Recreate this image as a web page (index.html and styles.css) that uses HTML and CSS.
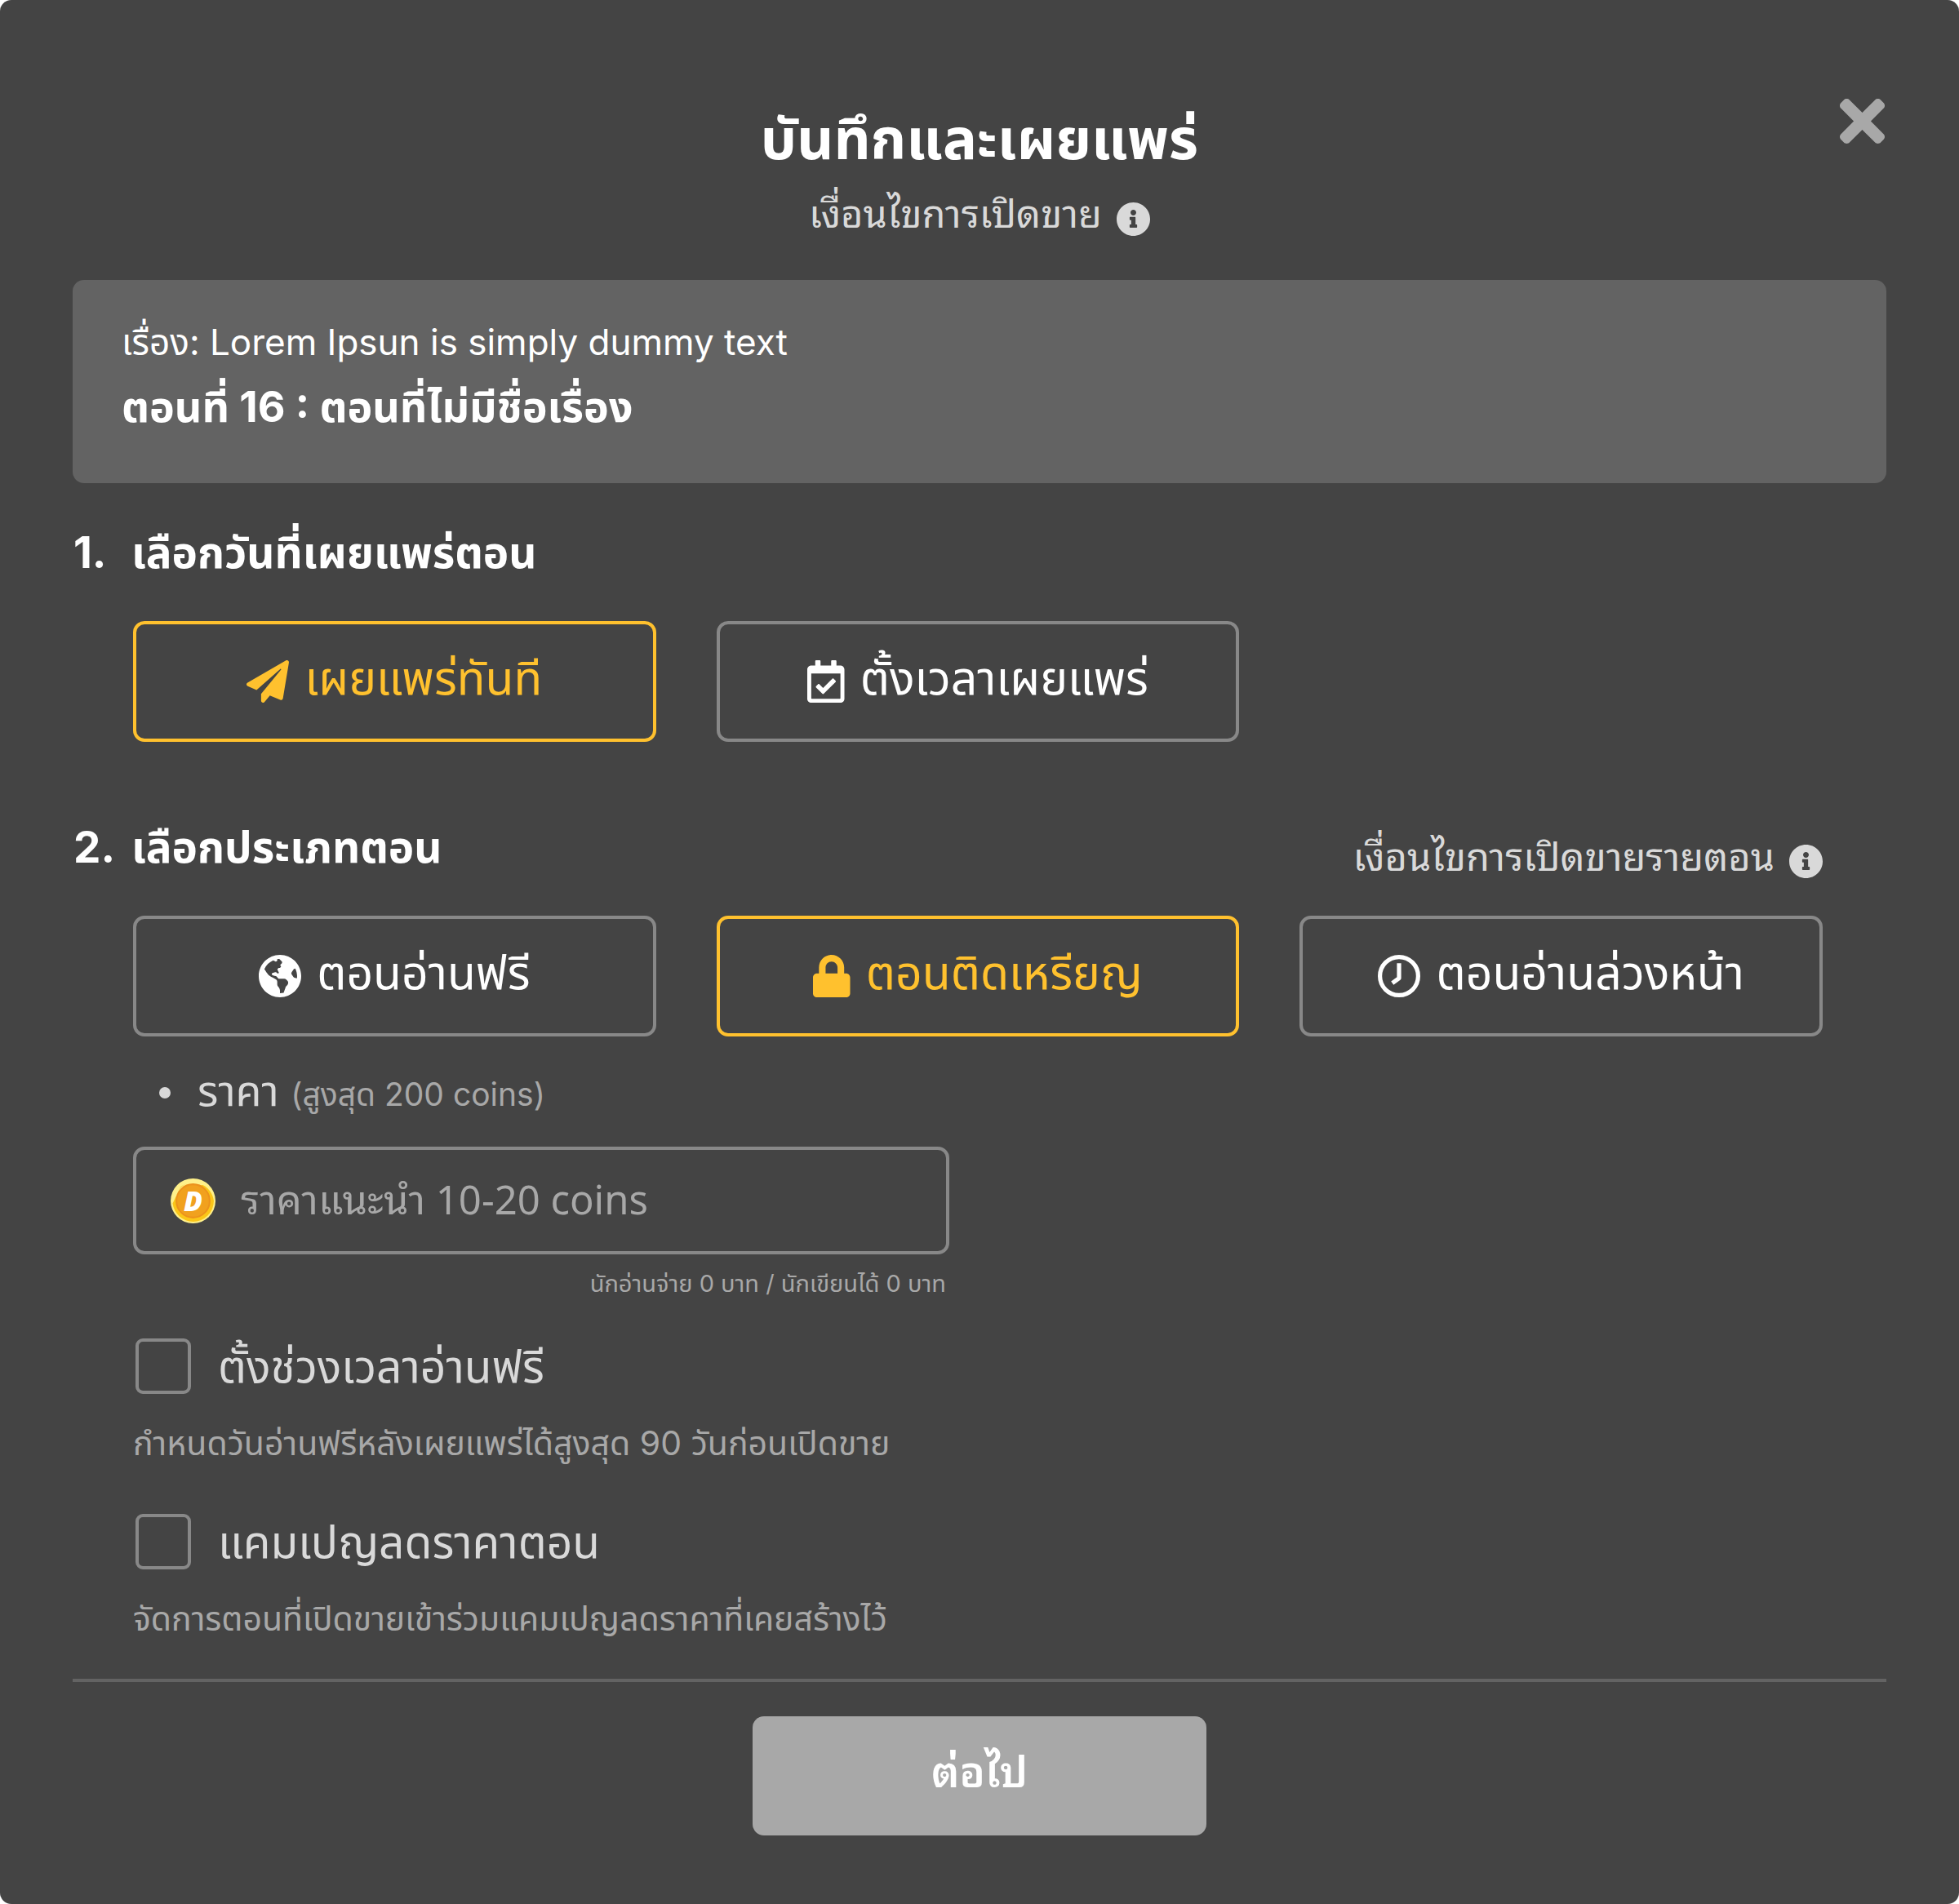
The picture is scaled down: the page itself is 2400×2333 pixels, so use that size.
FILE: index.html
```html
<!DOCTYPE html>
<html lang="th">
<head>
    <meta charset="UTF-8">
    <meta name="viewport" content="width=device-width, initial-scale=1.0">
    <title>บันทึกและเผยแพร่</title>
    <link rel="stylesheet" href="styles.css">
</head>
<body>
    <!-- Shared icon shapes -->
    <svg class="sprite" aria-hidden="true">
        <symbol id="icon-info" viewBox="8 8 496 496">
            <path d="M256 8C119.043 8 8 119.083 8 256c0 136.997 111.043 248 248 248s248-111.003 248-248C504 119.083 392.957 8 256 8zm0 110c23.196 0 42 18.804 42 42s-18.804 42-42 42-42-18.804-42-42 18.804-42 42-42zm56 254c0 6.627-5.373 12-12 12h-88c-6.627 0-12-5.373-12-12v-24c0-6.627 5.373-12 12-12h12v-64h-12c-6.627 0-12-5.373-12-12v-24c0-6.627 5.373-12 12-12h64c6.627 0 12 5.373 12 12v100h12c6.627 0 12 5.373 12 12v24z"/>
        </symbol>
    </svg>

    <main class="modal">
        <header class="modal-header">
            <h1>บันทึกและเผยแพร่</h1>
            <a class="terms" href="#terms">เงื่อนไขการเปิดขาย
                <svg class="info-icon" aria-hidden="true"><use href="#icon-info"/></svg>
            </a>
            <button class="close" type="button" aria-label="ปิด">
                <svg viewBox="0 80 352 352" aria-hidden="true"><path d="M242.72 256l100.07-100.07c12.28-12.28 12.28-32.19 0-44.48l-22.24-22.24c-12.28-12.28-32.19-12.28-44.48 0L176 189.28 75.93 89.21c-12.28-12.28-32.19-12.28-44.48 0L9.21 111.45c-12.28 12.28-12.28 32.19 0 44.48L109.28 256 9.21 356.07c-12.28 12.28-12.28 32.19 0 44.48l22.24 22.24c12.28 12.28 32.2 12.28 44.48 0L176 322.72l100.07 100.07c12.28 12.28 32.2 12.28 44.48 0l22.24-22.24c12.28-12.28 12.28-32.19 0-44.48L242.72 256z"/></svg>
            </button>
        </header>

        <section class="episode">
            <p class="story">เรื่อง: Lorem Ipsun is simply dummy text</p>
            <p class="chapter">ตอนที่ 16 : ตอนที่ไม่มีชื่อเรื่อง</p>
        </section>

        <section class="step">
            <div class="step-head">
                <h2><span class="num">1.</span>เลือกวันที่เผยแพร่ตอน</h2>
            </div>
            <div class="options">
                <button class="option selected" type="button" aria-pressed="true">
                    <svg viewBox="0 0 512 512" aria-hidden="true"><path d="M476 3.2L12.5 270.6c-18.1 10.4-15.8 35.6 2.2 43.2L121 358.4l287.3-253.2c5.5-4.9 13.3 2.6 8.6 8.3L176 407v80.5c0 23.6 28.5 32.9 42.5 15.8L282 426l124.6 52.2c14.2 6 30.4-2.9 33-18.2l72-432C515 7.8 493.3-6.8 476 3.2z"/></svg>
                    <span>เผยแพร่ทันที</span>
                </button>
                <button class="option" type="button" aria-pressed="false">
                    <svg viewBox="0 0 448 512" aria-hidden="true"><path d="M400 64h-48V12c0-6.627-5.373-12-12-12h-40c-6.627 0-12 5.373-12 12v52H160V12c0-6.627-5.373-12-12-12h-40c-6.627 0-12 5.373-12 12v52H48C21.49 64 0 85.49 0 112v352c0 26.51 21.49 48 48 48h352c26.51 0 48-21.49 48-48V112c0-26.51-21.49-48-48-48zm-6 400H54a6 6 0 0 1-6-6V160h352v298a6 6 0 0 1-6 6zm-52.849-200.65L198.842 404.519c-4.705 4.667-12.303 4.637-16.971-.068l-75.091-75.699c-4.667-4.705-4.637-12.303.068-16.971l22.719-22.536c4.705-4.667 12.303-4.637 16.97.069l44.104 44.461 111.072-110.181c4.705-4.667 12.303-4.637 16.971.068l22.536 22.718c4.667 4.705 4.636 12.303-.069 16.97z"/></svg>
                    <span>ตั้งเวลาเผยแพร่</span>
                </button>
            </div>
        </section>

        <section class="step">
            <div class="step-head">
                <h2><span class="num">2.</span>เลือกประเภทตอน</h2>
                <a class="terms" href="#episode-terms">เงื่อนไขการเปิดขายรายตอน
                    <svg class="info-icon" aria-hidden="true"><use href="#icon-info"/></svg>
                </a>
            </div>
            <div class="options">
                <button class="option" type="button" aria-pressed="false">
                    <svg viewBox="0 8 496 496" aria-hidden="true"><path d="M248 8C111.03 8 0 119.03 0 256s111.03 248 248 248 248-111.03 248-248S384.97 8 248 8zm82.29 357.6c-3.9 3.88-7.99 7.95-11.31 11.28-2.99 3-5.1 6.7-6.17 10.71-1.51 5.66-2.73 11.38-4.77 16.87l-17.39 46.85c-13.76 3-28 4.69-42.65 4.69v-27.38c1.69-12.62-7.64-36.26-22.63-51.25-6-6-9.37-14.14-9.37-22.63v-32.01c0-11.64-6.27-22.34-16.46-27.97-14.37-7.95-34.81-19.06-48.81-26.11-11.48-5.78-22.1-13.14-31.65-21.75l-.8-.72a114.792 114.792 0 0 1-18.06-20.74c-9.38-13.77-24.66-36.42-34.59-51.14 20.47-45.5 57.36-82.04 103.2-101.89l24.01 12.01C203.48 89.74 216 82.01 216 70.11v-11.3c7.99-1.29 16.12-2.11 24.39-2.42l28.3 28.3c6.25 6.25 6.25 16.38 0 22.63L264 112l-10.34 10.34c-3.12 3.12-3.12 8.19 0 11.31l4.69 4.69c3.12 3.12 3.12 8.19 0 11.31l-8 8a8.008 8.008 0 0 1-5.66 2.34h-8.99c-2.08 0-4.08.81-5.58 2.27l-9.92 9.65a8.008 8.008 0 0 0-1.58 9.31l15.59 31.19c2.66 5.32-1.21 11.58-7.15 11.58h-5.64c-1.93 0-3.79-.7-5.24-1.96l-9.28-8.06a16.017 16.017 0 0 0-15.55-3.1l-31.17 10.39a11.95 11.95 0 0 0-8.17 11.34c0 4.53 2.56 8.66 6.61 10.69l11.08 5.54c9.41 4.71 19.79 7.16 30.31 7.16s22.59 27.29 32 32h66.75c8.49 0 16.62 3.37 22.63 9.37l13.69 13.69a30.503 30.503 0 0 1 8.93 21.57 46.536 46.536 0 0 1-13.72 32.98zM417 274.25c-5.79-1.45-10.84-5-14.15-9.97l-17.98-26.97a23.97 23.97 0 0 1 0-26.62l19.59-29.38c2.32-3.47 5.5-6.29 9.24-8.15l12.98-6.49C440.2 193.59 448 223.87 448 256c0 8.67-.74 17.16-1.82 25.54L417 274.25z"/></svg>
                    <span>ตอนอ่านฟรี</span>
                </button>
                <button class="option selected" type="button" aria-pressed="true">
                    <svg viewBox="0 0 448 512" aria-hidden="true"><path d="M400 224h-24v-72C376 68.2 307.8 0 224 0S72 68.2 72 152v72H48c-26.5 0-48 21.5-48 48v192c0 26.5 21.5 48 48 48h352c26.5 0 48-21.5 48-48V272c0-26.5-21.5-48-48-48zm-104 0H152v-72c0-39.7 32.3-72 72-72s72 32.3 72 72v72z"/></svg>
                    <span>ตอนติดเหรียญ</span>
                </button>
                <button class="option" type="button" aria-pressed="false">
                    <svg class="clock" viewBox="0 0 24 24" aria-hidden="true"><circle cx="12" cy="12" r="10.8"/><path d="M12 4.7V13.2L8.2 16"/></svg>
                    <span>ตอนอ่านล่วงหน้า</span>
                </button>
            </div>

            <ul class="price-list">
                <li><label for="price">ราคา <small>(สูงสุด 200 coins)</small></label></li>
            </ul>
            <div class="price">
                <div class="price-field">
                    <svg class="coin" viewBox="0 0 54 54" aria-hidden="true">
                        <circle cx="27" cy="27" r="27" fill="#fff08a"/>
                        <path d="M27 52A25 25 0 0 1 2.500 30L12 10A25 25 0 0 1 52 27A25 25 0 0 1 27 52z" fill="#fbc618"/>
                        <path d="M6 22L12 11A24 24 0 0 1 42 7L27 10z" fill="#fff08a"/>
                        <circle cx="27" cy="27" r="20" fill="#f1a11e" stroke="#ec921c" stroke-width="2"/>
                        <text x="27" y="39" text-anchor="middle">D</text>
                    </svg>
                    <input id="price" type="text" inputmode="numeric" placeholder="ราคาแนะนำ 10-20 coins">
                </div>
                <p class="payout">นักอ่านจ่าย 0 บาท / นักเขียนได้ 0 บาท</p>
            </div>

            <div class="check">
                <label><input type="checkbox">ตั้งช่วงเวลาอ่านฟรี</label>
                <p>กำหนดวันอ่านฟรีหลังเผยแพร่ได้สูงสุด 90 วันก่อนเปิดขาย</p>
            </div>
            <div class="check">
                <label><input type="checkbox">แคมเปญลดราคาตอน</label>
                <p>จัดการตอนที่เปิดขายเข้าร่วมแคมเปญลดราคาที่เคยสร้างไว้</p>
            </div>
        </section>

        <footer class="modal-footer">
            <button class="next" type="button">ต่อไป</button>
        </footer>
    </main>
</body>
</html>
```

FILE: styles.css
```css
* {
    box-sizing: border-box;
}

body {
    margin: 0;
    background: #fff;
    color: #fff;
    font-family: Inter, "Noto Sans Thai", "Noto Sans", sans-serif;
}

h1, h2, p, ul {
    margin: 0;
}

button, input {
    font-family: inherit;
}

.sprite {
    display: none;
}

.modal {
    position: relative;
    padding: 120px 89px 84px;
    background: #444;
    border-radius: 14px;
}

/* Header */
.modal-header {
    display: flex;
    flex-direction: column;
    align-items: center;
    height: 223px;
}

h1 {
    font-size: 70px;
    line-height: 100px;
    font-weight: 700;
}

.terms {
    display: flex;
    align-items: center;
    gap: 18px;
    color: #d9d9d9;
    font-family: Inter, "Noto Sans Thai Looped", "Noto Sans Thai", sans-serif;
    font-size: 47px;
    line-height: 84px;
    text-decoration: none;
}

.info-icon {
    width: 41px;
    height: 41px;
    margin-top: 12px;
    fill: currentColor;
}

.close {
    position: absolute;
    top: 121px;
    right: 91px;
    width: 55px;
    height: 55px;
    padding: 0;
    border: 0;
    background: none;
    cursor: pointer;
}

.close svg {
    display: block;
    fill: #a8a8a8;
}

/* Episode box */
.episode {
    padding: 36px 60px 53px;
    background: #636363;
    border-radius: 14px;
}

.story {
    font-size: 44px;
    line-height: 80px;
}

.chapter {
    font-size: 52px;
    line-height: 80px;
    font-weight: 700;
}

/* Steps */
.step {
    padding: 0 78px 0 74px;
}

.step-head {
    display: flex;
    justify-content: space-between;
    align-items: center;
    height: 169px;
}

.step + .step .step-head {
    margin-top: 44px;
}

.step-head .terms {
    margin-top: 24px;
}

h2 {
    display: flex;
    margin-left: -73px;
    font-size: 53px;
    line-height: 80px;
    font-weight: 700;
}

.num {
    width: 71px;
}

.options {
    display: grid;
    grid-template-columns: repeat(3, 1fr);
    gap: 74px;
}

.option {
    display: flex;
    align-items: center;
    justify-content: center;
    gap: 19px;
    height: 148px;
    padding: 0;
    border: 4px solid #888;
    border-radius: 14px;
    background: none;
    color: #fff;
    font-size: 57px;
    line-height: 80px;
    cursor: pointer;
}

.option span {
    padding-bottom: 8px;
}

.option svg {
    height: 52px;
    fill: currentColor;
}

.option.selected {
    border-color: #ffc12e;
    color: #ffc12e;
}

.option .clock {
    fill: none;
    stroke: currentColor;
    stroke-width: 2.4;
    stroke-linejoin: round;
}

/* Price */
.price-list {
    padding-left: 32px;
    margin: 29px 0 26px;
    color: #d9d9d9;
    font-size: 52px;
    line-height: 80px;
    list-style: none;
}

.price-list li {
    display: flex;
    align-items: center;
    gap: 33px;
    height: 80px;
}

.price-list li::before {
    content: "";
    width: 14px;
    height: 14px;
    border-radius: 50%;
    background: #d9d9d9;
}

.price-list small {
    color: #a8a8a8;
    font-size: 39px;
}

.price {
    max-width: 1000px;
}

.price-field {
    display: flex;
    align-items: center;
    gap: 31px;
    height: 132px;
    padding: 0 40px 0 42px;
    border: 4px solid #888;
    border-radius: 14px;
}

.coin {
    width: 55px;
    height: 55px;
}

.coin text {
    fill: #fff;
    font-family: "Open Sans", sans-serif;
    font-size: 33px;
    font-weight: 800;
    font-style: italic;
}

.price-field input {
    flex: 1;
    min-width: 0;
    height: 100px;
    padding: 0 0 4px;
    border: 0;
    outline: 0;
    background: none;
    color: #fff;
    font-family: "Noto Sans", "Noto Sans Thai Looped", "Noto Sans Thai", sans-serif;
    font-size: 49px;
}

.price-field input::placeholder {
    color: #a8a8a8;
    opacity: 1;
}

.payout {
    padding-right: 4px;
    color: #a8a8a8;
    font-size: 29px;
    line-height: 72px;
    text-align: right;
}

/* Checkboxes */
.check {
    height: 215px;
    padding-top: 31px;
}

.check label {
    display: flex;
    align-items: center;
    gap: 33px;
    padding-left: 3px;
    color: #d9d9d9;
    font-size: 55px;
    line-height: 68px;
}

.check input {
    appearance: none;
    width: 68px;
    height: 68px;
    margin: 0;
    border: 4px solid #888;
    border-radius: 9px;
}

.check p {
    margin-top: 20px;
    color: #a8a8a8;
    font-size: 41px;
    line-height: 80px;
}

/* Footer */
.modal-footer {
    display: flex;
    justify-content: center;
    margin-top: 18px;
    padding-top: 42px;
    border-top: 4px solid #636363;
}

.next {
    width: 556px;
    height: 146px;
    padding: 0 0 8px;
    border: 0;
    border-radius: 14px;
    background: #a8a8a8;
    color: #fff;
    font-family: Inter, "Noto Sans Thai Looped", "Noto Sans Thai", sans-serif;
    font-size: 52px;
    font-weight: 600;
    line-height: 80px;
    cursor: pointer;
}
```
